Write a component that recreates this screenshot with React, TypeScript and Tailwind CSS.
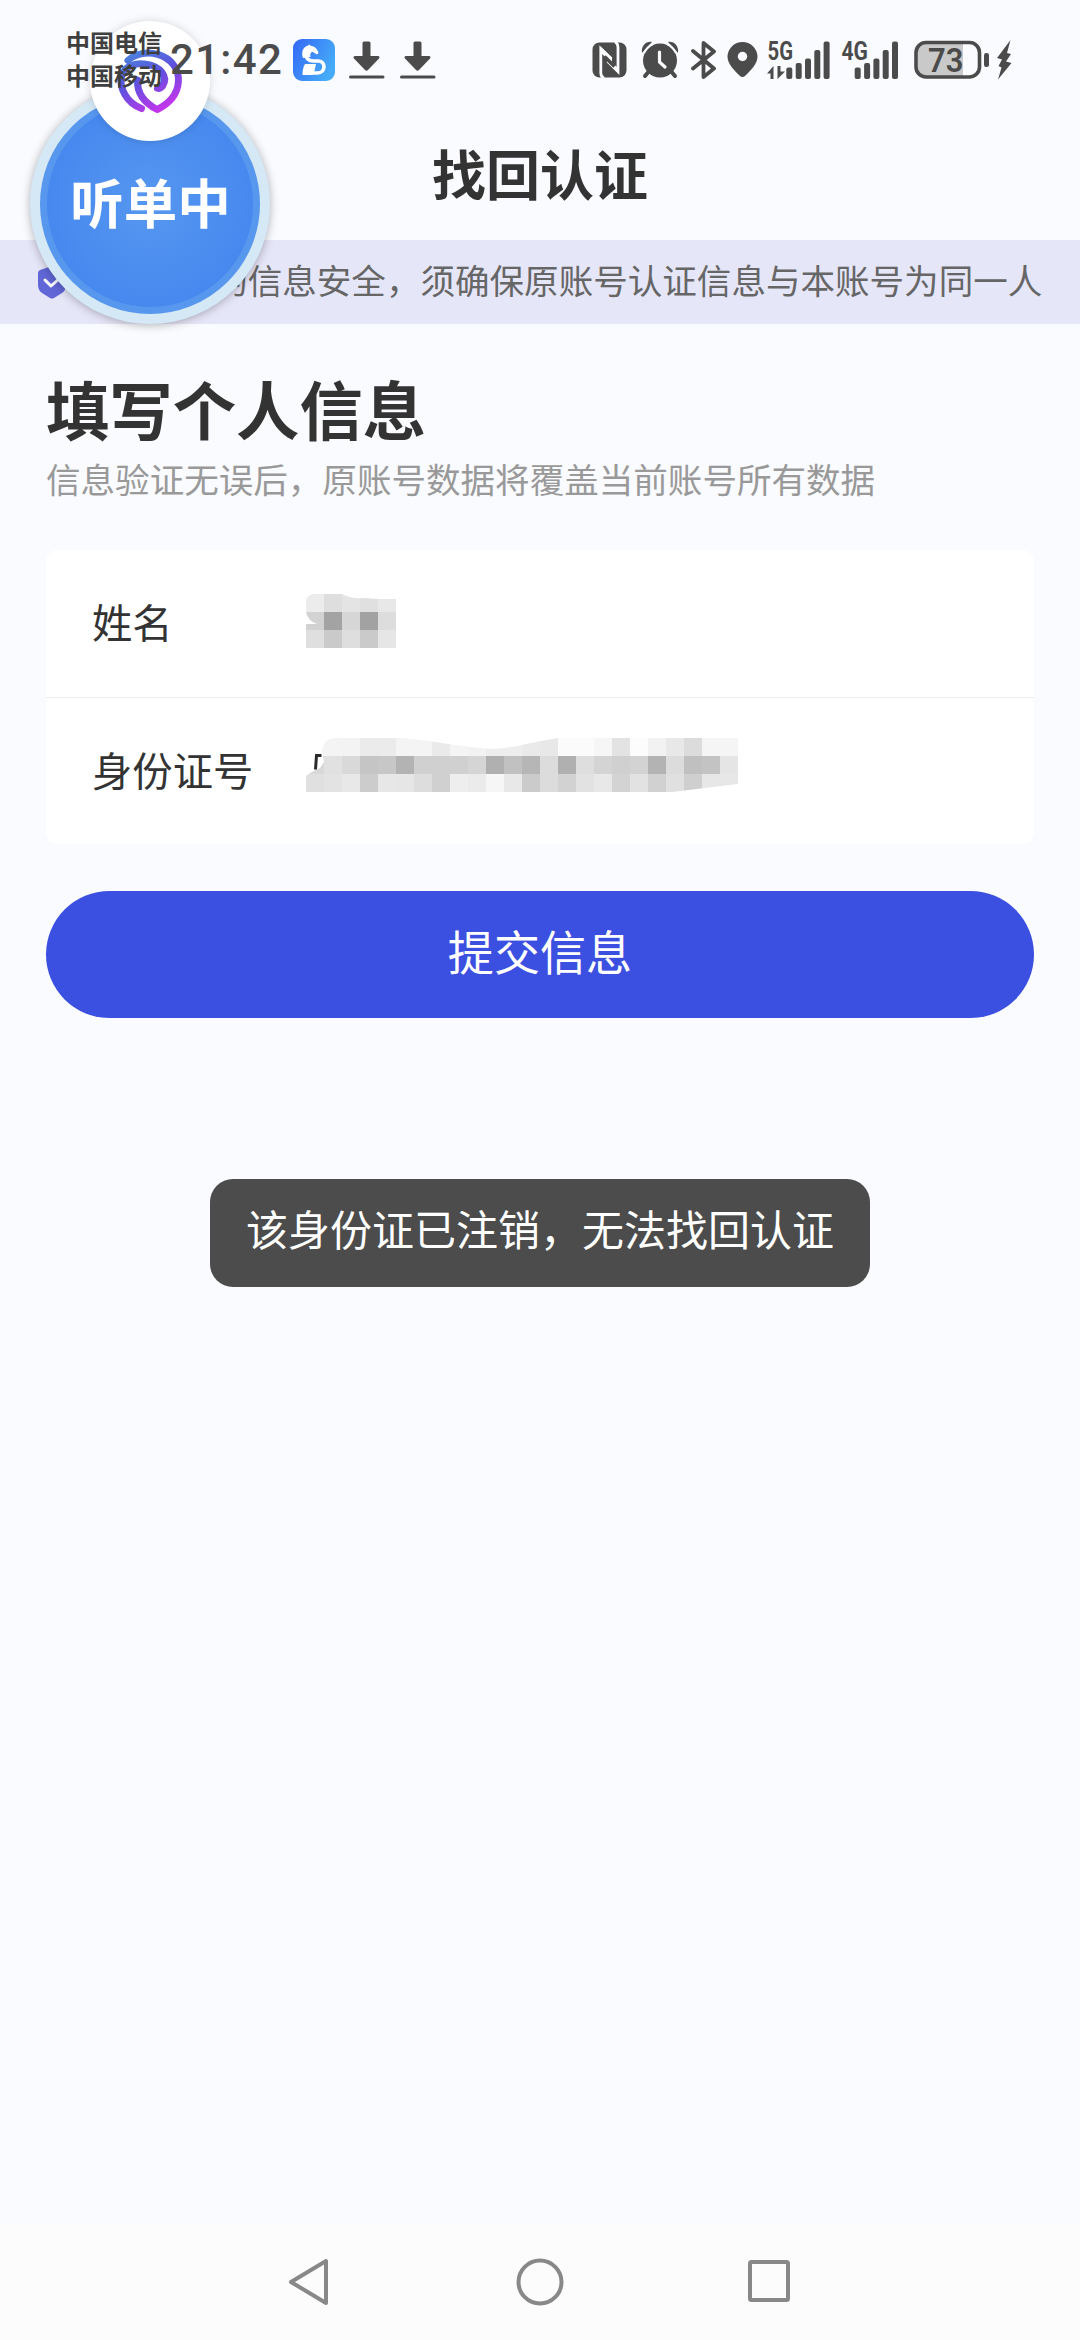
import React from 'react';

const INK = '#4b4b4b';

const NAME_MOSAIC = [
  ['#ececec', '#dedede', '#e4e4e4', '#e0e0e0', '#e8e8e8'],
  ['#d2d2d2', '#a3a3a3', '#d6d6d6', '#a2a2a2', '#dddddd'],
  ['#dfdfdf', '#cacaca', '#dedede', '#cacaca', '#e6e6e6'],
];

const ID_MOSAIC = [
  'f4 f4 f3 eb eb f4 f4 ea f4 f2 ee ee ea e8 fb fb f6 e3 fc f2 e8 dc f5 f5',
  'd8 e1 d9 c5 c7 b3 d0 d0 d0 d5 b0 c1 b6 dc b0 de d4 d0 d3 b3 dc c0 c3 e5',
  'e0 e3 e8 cc e7 e6 dd d0 ee eb f6 e8 cb dc d2 e2 e8 d3 e2 d1 e0 cf e7 e7',
].map((row) => row.split(' ').map((v) => `#${v}${v}${v}`));

const Cells = ({ rows }: { rows: string[][] }) => (
  <>
    {rows.map((row, y) =>
      row.map((fill, x) => (
        <rect key={`${x}-${y}`} x={x * 18} y={y * 18} width={18} height={18} fill={fill} shapeRendering="crispEdges" />
      )),
    )}
  </>
);

const AppBadge = () => (
  <svg className="ml-[12px] h-[42px] w-[42px]" viewBox="0 0 42 42">
    <defs>
      <linearGradient id="badge" x1="0" y1="0" x2="1" y2="0.5">
        <stop offset="0" stopColor="#3568f6" />
        <stop offset="1" stopColor="#45aaf8" />
      </linearGradient>
    </defs>
    <rect width="42" height="42" rx="9" fill="url(#badge)" />
    <path d="M10 19C8 13 10 8 15 6.500l1.500-1 1 1.200c4 .3 7 3 8 7.300l-1.500 1.500-4-2.500c-2.500 0-3 2-2.500 5z" fill="#fff" />
    <path d="M12.500 14c0 5 3 8 8 8h5c7.500 0 7.500 12-1 12h-4" fill="none" stroke="#fff" strokeWidth="3.600" />
    <path d="M12 25h11l-2.500 11H9.500c0-4 .5-8 2.500-11z" fill="#fff" />
  </svg>
);

const DownloadIcon = () => (
  <svg className="ml-[13px] h-[38px] w-[37px] first-of-type:ml-0" viewBox="0 0 37 38" fill={INK}>
    <path d="M14.500 2a1.500 1.500 0 0 1 1.500-1.500h5a1.500 1.500 0 0 1 1.500 1.500v13h7.500c1.500 0 2 1.500 1 2.500L20 29c-1 1-2 1-3 0L6 17.500c-1-1-.5-2.500 1-2.500h7.500z" />
    <rect x="1" y="34.500" width="35.500" height="3" rx="1.500" />
  </svg>
);

const NfcIcon = () => (
  <svg className="h-[36px] w-[35px]" viewBox="0 0 35 36">
    <rect x="0.500" y="0.500" width="34" height="35" rx="7" fill={INK} />
    <path d="M12 36.500Q8.800 34.500 8.800 31V6.500L19.500 17" fill="none" stroke="#fafbff" strokeWidth="2.800" />
    <path d="M23 -.5Q26 1.500 26 5V29.500L15.500 19" fill="none" stroke="#fafbff" strokeWidth="2.800" />
    <path d="M9 5l11 10.500v6L9 11z" fill="#fafbff" />
    <path d="M26 31L15 20.500v-5L26 26z" fill="#fafbff" />
    <path d="M12.500 14.500L22.500 24.500" stroke={INK} strokeWidth="3.500" />
  </svg>
);

const AlarmIcon = () => (
  <svg className="ml-[14px] h-[38px] w-[38px]" viewBox="0 0 38 38">
    <path d="M9 29l-5 6M29 29l5 6" stroke={INK} strokeWidth="4" strokeLinecap="round" />
    <circle cx="19" cy="19.500" r="17" fill={INK} />
    <path d="M1 12C0 5 5 0 11 1zM37 12C38 5 33 0 27 1z" fill={INK} />
    <path d="M3 12C5 8 8 5 12 3M35 12C33 8 30 5 26 3" stroke="#fafbff" strokeWidth="2" fill="none" />
    <path d="M18.500 11v10l5.500 5" stroke="#fafbff" strokeWidth="3.200" fill="none" strokeLinecap="round" strokeLinejoin="round" />
  </svg>
);

const BluetoothIcon = () => (
  <svg className="ml-[12px] h-[38px] w-[26px]" viewBox="0 0 26 38" fill="none" stroke={INK} strokeWidth="3.800" strokeLinecap="round" strokeLinejoin="round">
    <path d="M2 10l21 17.500-10.500 8.500V2L23 10.500 2 27.500" />
  </svg>
);

const PinIcon = () => (
  <svg className="ml-[10px] h-[38px] w-[31px]" viewBox="0 0 31 38">
    <path d="M15.500 1A15 15 0 0 0 .5 15.500C.5 23 7 29 12.500 34.500c2 2 4 2 6 0C24 29 30.500 23 30.500 15.500A15 15 0 0 0 15.500 1z" fill={INK} />
    <circle cx="15.500" cy="15.500" r="4.700" fill="#fafbff" />
  </svg>
);

const Bars = ({ x }: { x: number }) => (
  <g fill={INK}>
    <rect x={x} y="26.500" width="6" height="11.500" rx="2" />
    <rect x={x + 9.4} y="22" width="6" height="16" rx="2" />
    <rect x={x + 18.7} y="17.500" width="6" height="20.500" rx="2" />
    <rect x={x + 28} y="9" width="6" height="29" rx="2" />
    <rect x={x + 37.3} y="0.500" width="6" height="37.500" rx="2" />
  </g>
);

const SignalIcons = () => (
  <>
    <svg className="-mt-[10px] ml-[9px] h-[48px] w-[64px]" viewBox="0 -10 64 48">
      <text x="0.500" y="18.500" textLength="25.500" lengthAdjust="spacingAndGlyphs" fill={INK} className="font-['Roboto',sans-serif] text-[25px] font-bold">5G</text>
      <path d="M0 32.500l6.500-7.500v13H3.500v-5.500zM10.500 38V25h3v5.500h4.500z" fill={INK} />
      <Bars x={19.3} />
    </svg>
    <svg className="-mt-[10px] ml-[10px] h-[48px] w-[58px]" viewBox="0 -10 58 48">
      <text x="0.500" y="18.500" textLength="26.500" lengthAdjust="spacingAndGlyphs" fill={INK} className="font-['Roboto',sans-serif] text-[25px] font-bold">4G</text>
      <Bars x={13.7} />
    </svg>
  </>
);

const BatteryIcon = () => (
  <svg className="ml-[15px] h-[40px] w-[100px]" viewBox="0 0 100 40">
    <path d="M12 3.500h37v33H12q-8.500 0-8.500-8.500V12q0-8.500 8.500-8.500z" fill="#c9c9c9" />
    <rect x="2" y="2.500" width="63.500" height="34.500" rx="10" fill="none" stroke={INK} strokeWidth="3.600" />
    <text x="14" y="31.500" textLength="35.500" lengthAdjust="spacingAndGlyphs" fill={INK} className="font-['Roboto',sans-serif] text-[34px] font-semibold">73</text>
    <rect x="70" y="13" width="5" height="14" rx="2.200" fill={INK} />
    <path d="M96.500 0L83 18l5 1.500-3.500 6.500 3 1.500L84 39.500 97.500 23l-5.500-1.500 5-7.500-4-1z" fill={INK} />
  </svg>
);

const StatusBar = () => (
  <div className="relative z-20 flex h-[120px] items-center text-[#3f3f3f]">
    <div className="-mt-[5px] ml-[66px] w-[96px] text-[24px] leading-[33px] font-bold">
      <div>中国电信</div>
      <div>中国移动</div>
    </div>
    <div className="ml-[8px] w-[111px] font-['Roboto',sans-serif] text-[42px] leading-none font-medium tracking-[1.300px] text-[#4b4b4b]">21:42</div>
    <AppBadge />
    <div className="ml-[13px] flex">
      <DownloadIcon />
      <div className="ml-[14px]">
        <DownloadIcon />
      </div>
    </div>
    <div className="mr-[66px] ml-auto flex items-center">
      <NfcIcon />
      <AlarmIcon />
      <BluetoothIcon />
      <PinIcon />
      <SignalIcons />
      <BatteryIcon />
    </div>
  </div>
);

const Shield = () => (
  <svg className="mr-[8px] h-[34px] w-[30px]" viewBox="0 0 30 34">
    <path d="M15 1l12 4q2 1 2 3v12q0 5-4 8l-8 5q-2 1-4 0l-8-5q-4-3-4-8V8q0-2 2-3z" fill="#6267d8" />
    <path d="M8 15l6 6 9-8" fill="none" stroke="#fff" strokeWidth="3" strokeLinecap="round" strokeLinejoin="round" />
  </svg>
);

const FloatingBubble = () => (
  <div className="absolute top-[21px] left-[30px] z-10 h-[303px] w-[240px]">
    <div className="absolute bottom-0 flex h-[240px] w-[240px] items-center justify-center rounded-full bg-[#d5e8f6] shadow-[0_1px_10px_rgba(0,0,0,0.3)]">
      <div className="flex h-[220px] w-[220px] items-center justify-center rounded-full border-[7px] border-[#5797ee] bg-radial from-[#5697f0] to-[#4082ee] pb-[5px] pl-[1px] text-[53.500px] font-bold text-white">
        听单中
      </div>
    </div>
    <div className="absolute top-0 left-[60px] h-[120px] w-[120px] rounded-full bg-white shadow-[0_0_8px_rgba(0,0,0,0.15)]">
      <svg className="absolute top-[26px] left-[23px] h-[70px] w-[73px]" viewBox="340 140 220 210" fill="none" stroke="url(#swirl)" strokeWidth="21" strokeLinecap="round" strokeLinejoin="round">
        <defs>
          <linearGradient id="swirl" gradientUnits="userSpaceOnUse" x1="390" y1="150" x2="480" y2="330">
            <stop offset="0" stopColor="#4a86dc" />
            <stop offset="0.500" stopColor="#5f50de" />
            <stop offset="1" stopColor="#c436ec" />
          </linearGradient>
        </defs>
        <path d="M385 180C408 158 445 153 475 162C515 174 540 205 537 245C534 285 505 312 473 328C435 308 412 280 414 240" />
        <path d="M426 325C380 308 358 262 366 228C375 195 410 186 440 191C482 197 507 228 490 256C487 262 480 266 474 264" />
      </svg>
    </div>
  </div>
);

const NameValue = () => (
  <svg className="h-[54px] w-[90px]" viewBox="0 0 90 54">
    <defs>
      <clipPath id="nameClip">
        <path d="M0 7Q1 0 9 0H36Q45 5 58 4L72 5H90V54H0V30H11Q2 27 0 18z" />
      </clipPath>
    </defs>
    <g clipPath="url(#nameClip)">
      <Cells rows={NAME_MOSAIC} />
    </g>
  </svg>
);

const IdValue = () => (
  <svg className="h-[54px] w-[432px]" viewBox="0 0 432 54">
    <defs>
      <clipPath id="idClip">
        <path d="M0 38Q5 34 14 30L18 24L16 12Q18 0 30 0H96C130 3 160 10 187 11C210 10 225 4 252 0H432V46L366 54H0z" />
      </clipPath>
    </defs>
    <g clipPath="url(#idClip)">
      <Cells rows={ID_MOSAIC} />
    </g>
    <path d="M15.500 17.500H10.500L9.500 31.500" fill="none" stroke="#2b2b2b" strokeWidth="3" />
  </svg>
);

const NavBar = () => (
  <div className="mt-auto flex h-[116px] items-center justify-center gap-[182px] bg-[#fcfcfc]">
    <svg className="h-[48px] w-[48px]" viewBox="0 0 48 48" fill="none" stroke="#888" strokeWidth="4" strokeLinejoin="round">
      <path d="M40 3v42L5 24z" />
    </svg>
    <svg className="h-[48px] w-[48px]" viewBox="0 0 48 48" fill="none" stroke="#888" strokeWidth="4">
      <circle cx="24" cy="24" r="21.500" />
    </svg>
    <svg className="h-[48px] w-[48px]" viewBox="0 0 48 48" fill="none" stroke="#888" strokeWidth="4">
      <rect x="4" y="4" width="38" height="38" rx="1.500" />
    </svg>
  </div>
);

const App = () => {
  return (
    <div className="relative flex h-[2340px] w-[1080px] flex-col overflow-hidden bg-[#fafbff] font-['Noto_Sans_CJK_SC',sans-serif] text-[#333]">
      <StatusBar />
      <FloatingBubble />

      <h1 className="flex h-[120px] items-center justify-center pb-[15px] text-[54px] leading-none font-bold">
        找回认证
      </h1>

      <div className="flex h-[84px] items-center bg-[#e6e6f9] pl-[37px] text-[34.560px] whitespace-nowrap text-[#666]">
        <Shield />
        <span className="pb-[6px] leading-[78px]">为保障您的信息安全，须确保原账号认证信息与本账号为同一人</span>
      </div>

      <div className="px-[46px] pt-[42px]">
        <h2 className="text-[63.360px] leading-[84px] font-bold">填写个人信息</h2>
        <p className="mt-[1px] text-[34.560px] leading-[54px] text-[#999]">信息验证无误后，原账号数据将覆盖当前账号所有数据</p>

        <div className="mt-[45px] rounded-[12px] bg-white text-[40.320px]">
          <div className="flex h-[148px] items-center border-b border-[#ededed] pl-[46px]">
            <span className="w-[214px] pb-[4px]">姓名</span>
            <div className="pb-[5px]"><NameValue /></div>
          </div>
          <div className="flex h-[146px] items-center pl-[46px]">
            <span className="w-[214px] pb-[4px]">身份证号</span>
            <div className="pb-[12px]"><IdValue /></div>
          </div>
        </div>

        <button className="mt-[47px] block h-[127px] w-full rounded-full bg-[#3b50e0] pb-[8px] text-[46.080px] text-white">
          提交信息
        </button>
      </div>

      <div className="mx-auto mt-[161px] flex h-[108px] w-[660px] items-center justify-center rounded-[23px] bg-[#4b4c4b] pb-[11px] text-[42px] whitespace-nowrap text-white">
        该身份证已注销，无法找回认证
      </div>

      <NavBar />
    </div>
  );
};

export default App;
